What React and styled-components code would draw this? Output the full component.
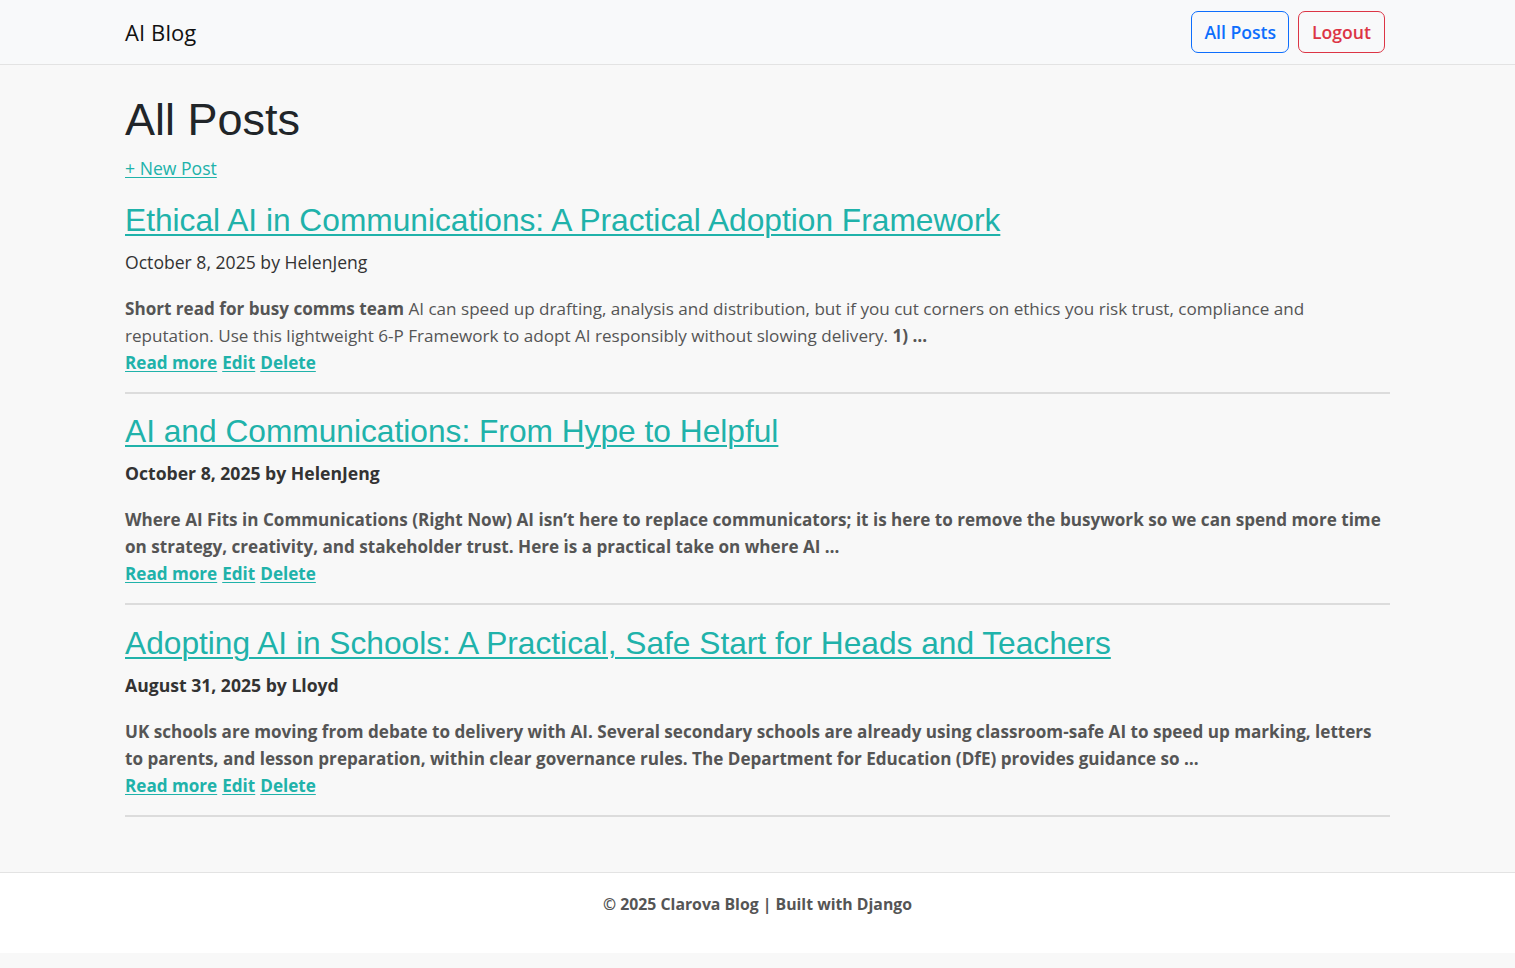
import React from "react";
import styled, { createGlobalStyle } from "styled-components";

const Global = createGlobalStyle`
  html, body { margin: 0; padding: 0; }
  body {
    background: #f8f8f8;
    font-family: "Open Sans", "Noto Sans", sans-serif;
    font-size: 17.6px;
    line-height: 1.5;
    color: #212529;
  }
  * { box-sizing: border-box; }
`;

const NavBar = styled.nav`
  height: 65px;
  background: #f8f9fa;
  border-bottom: 1px solid #e3e3e3;
`;

const NavInner = styled.div`
  max-width: 1265px;
  margin: 0 auto;
  height: 64px;
  display: flex;
  align-items: center;
  justify-content: space-between;
  padding-right: 5px;
`;

const Brand = styled.a`
  font-size: 22px;
  color: #111;
  text-decoration: none;
  letter-spacing: 0.1px;
`;

const NavButtons = styled.div`
  display: flex;
  gap: 9px;
`;

const OutlineButton = styled.a`
  display: inline-flex;
  align-items: center;
  justify-content: center;
  height: 42px;
  padding: 0 ${(p) => p.$pad}px;
  border: 1px solid ${(p) => p.$color};
  border-radius: 7px;
  color: ${(p) => p.$color};
  font-weight: 600;
  font-size: 17.6px;
  text-decoration: none;
`;

const Main = styled.main`
  max-width: 1265px;
  margin: 0 auto;
  padding: 28px 0 37px;
`;

const PageTitle = styled.h1`
  font-family: "Liberation Sans", Arial, sans-serif;
  font-weight: 400;
  font-size: 45px;
  line-height: 1.2;
  color: #212529;
  margin: 0 0 8px;
`;

const TealLink = styled.a`
  color: #20b2aa;
  text-decoration: underline;
  text-underline-offset: 2px;
  font-weight: ${(p) => (p.$bold ? 700 : 400)};
`;

const NewPost = styled.div`
  margin-bottom: 19.6px;
`;

const PostList = styled.div`
  display: flex;
  flex-direction: column;
`;

const Post = styled.article`
  display: flex;
  flex-direction: column;
`;

const PostTitle = styled.h2`
  font-family: "Liberation Sans", Arial, sans-serif;
  font-weight: 400;
  font-size: 31.7px;
  line-height: 38.4px;
  margin: 0 0 9.6px;
  a { text-underline-offset: 3px; text-decoration-thickness: 2px; }
`;

const Meta = styled.p`
  margin: 0 0 19.6px;
  color: #333;
  font-weight: ${(p) => (p.$bold ? 700 : 400)};
`;

const Excerpt = styled.p`
  margin: 0;
  font-size: 17.1px;
  line-height: 27px;
  color: #555;
  font-weight: ${(p) => (p.$bold ? 700 : 400)};
  b, strong { font-weight: 700; }
`;

const Actions = styled.div`
  display: flex;
  gap: 5px;
  font-size: 17.1px;
  line-height: 27px;
`;

const Divider = styled.hr`
  border: 0;
  border-top: 2px solid #dcdcdc;
  margin: 16px 0 18.5px;
`;

const Footer = styled.footer`
  background: #fff;
  border-top: 1px solid #e3e3e3;
  padding: 17.6px 0;
  text-align: center;
  margin-bottom: 16px;
`;

const FooterText = styled.p`
  margin: 0 0 17.6px;
  font-size: 15.8px;
  line-height: 26.4px;
  color: #555;
  font-weight: 700;
`;

const posts = [
  {
    title: "Ethical AI in Communications: A Practical Adoption Framework",
    meta: "October 8, 2025 by HelenJeng",
    bold: false,
    excerpt: (
      <>
        <strong>Short read for busy comms team</strong> AI can speed up drafting, analysis and
        distribution, but if you cut corners on ethics you risk trust, compliance and reputation.
        Use this lightweight 6-P Framework to adopt AI responsibly without slowing delivery.{" "}
        <strong>1) …</strong>
      </>
    ),
  },
  {
    title: "AI and Communications: From Hype to Helpful",
    meta: "October 8, 2025 by HelenJeng",
    bold: true,
    excerpt:
      "Where AI Fits in Communications (Right Now) AI isn’t here to replace communicators; it is here to remove the busywork so we can spend more time on strategy, creativity, and stakeholder trust. Here is a practical take on where AI …",
  },
  {
    title: "Adopting AI in Schools: A Practical, Safe Start for Heads and Teachers",
    meta: "August 31, 2025 by Lloyd",
    bold: true,
    excerpt:
      "UK schools are moving from debate to delivery with AI. Several secondary schools are already using classroom-safe AI to speed up marking, letters to parents, and lesson preparation, within clear governance rules. The Department for Education (DfE) provides guidance so …",
  },
];

export default function App() {
  return (
    <>
      <Global />
      <NavBar>
        <NavInner>
          <Brand href="#">AI Blog</Brand>
          <NavButtons>
            <OutlineButton href="#" $color="#0d6efd" $pad={12}>All Posts</OutlineButton>
            <OutlineButton href="#" $color="#dc3545" $pad={13}>Logout</OutlineButton>
          </NavButtons>
        </NavInner>
      </NavBar>
      <Main>
        <PageTitle>All Posts</PageTitle>
        <NewPost>
          <TealLink href="#">+ New Post</TealLink>
        </NewPost>
        <PostList>
          {posts.map((p) => (
            <Post key={p.title}>
              <PostTitle>
                <TealLink href="#">{p.title}</TealLink>
              </PostTitle>
              <Meta $bold={p.bold}>{p.meta}</Meta>
              <Excerpt $bold={p.bold}>{p.excerpt}</Excerpt>
              <Actions>
                <TealLink href="#" $bold>Read more</TealLink>
                <TealLink href="#" $bold>Edit</TealLink>
                <TealLink href="#" $bold>Delete</TealLink>
              </Actions>
              <Divider />
            </Post>
          ))}
        </PostList>
      </Main>
      <Footer>
        <FooterText>© 2025 Clarova Blog | Built with Django</FooterText>
      </Footer>
    </>
  );
}
